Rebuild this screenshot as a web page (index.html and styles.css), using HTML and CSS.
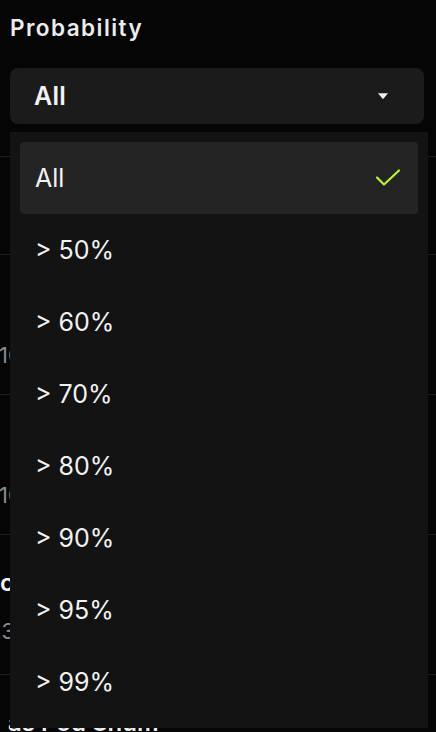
FILE: index.html
```html
<!DOCTYPE html>
<html lang="en">
<head>
<meta charset="utf-8">
<title>Probability filter</title>
<link rel="stylesheet" href="styles.css">
</head>
<body>
<div class="page">
  <div class="field-label">Probability</div>
  <div class="select-wrap">
    <div class="select">
      <span class="select-value">All</span>
      <svg class="caret" width="12" height="8" viewBox="0 0 12 8"><path d="M1 1.2 L11 1.2 L6.6 6.6 Q6 7.3 5.4 6.6 Z" fill="#f2f2f2"/></svg>
    </div>
    <div class="menu">
      <div class="option selected"><span>All</span>
        <svg class="check" width="28" height="20" viewBox="0 0 28 20"><path d="M3 9.5 L10 16.5 L25 2.5" fill="none" stroke="#b6f23c" stroke-width="2.2" stroke-linecap="round" stroke-linejoin="round"/></svg>
      </div>
      <div class="option"><span>&gt; 50%</span></div>
      <div class="option"><span>&gt; 60%</span></div>
      <div class="option"><span>&gt; 70%</span></div>
      <div class="option"><span>&gt; 80%</span></div>
      <div class="option"><span>&gt; 90%</span></div>
      <div class="option"><span>&gt; 95%</span></div>
      <div class="option"><span>&gt; 99%</span></div>
    </div>
  </div>
  <div class="list">
    <div class="row row-head"></div>
    <div class="row row-short"></div>
    <div class="row"><div class="row-title hidden-title">Market</div><div class="row-sub">10 signals</div></div>
    <div class="row"><div class="row-title hidden-title">Market</div><div class="row-sub">10 signals</div></div>
    <div class="row"><div class="row-title">crypto</div><div class="row-sub sub-shift">23 signals</div></div>
    <div class="row"><div class="row-title title-wide">as Pod Shum</div></div>
  </div>
</div>
</body>
</html>
```
FILE: styles.css
```css
* { box-sizing: border-box; }
html, body { margin: 0; padding: 0; }
body {
  background: #050505;
  color: #f0f0f0;
  font-family: Inter, "Noto Sans", sans-serif;
  width: 436px;
  height: 732px;
  overflow: hidden;
}
.page { padding-top: 13px; }
.field-label {
  font-size: 22.5px;
  font-weight: 600;
  line-height: 30px;
  padding-left: 10px;
  color: #ececec;
  letter-spacing: 1.45px;
}
.select-wrap {
  position: relative;
  margin: 25px 12px 0 10px;
}
.select {
  height: 56px;
  background: #1b1b1b;
  border-radius: 8px;
  display: flex;
  align-items: center;
  justify-content: space-between;
  padding: 0 35px 0 24px;
}
.select-value {
  font-size: 25px;
  font-weight: 600;
  color: #f2f2f2;
  letter-spacing: 0.3px;
}
.caret { display: block; }
.menu {
  position: absolute;
  top: 64px;
  left: 0;
  width: 418px;
  background: #131313;
  padding: 10px;
  z-index: 2;
}
.option {
  height: 72px;
  display: flex;
  align-items: center;
  justify-content: space-between;
  padding: 0 16px 0 16px;
  font-size: 25px;
  font-weight: 400;
  color: #f2f2f2;
  border-radius: 4px;
}
.option span { margin-left: -1px; }
.option.selected { background: #242424; }
.check { display: block; }
.list { margin-top: 0; }
.row {
  height: 140px;
  border-bottom: 1px solid #1f1f1f;
  overflow: hidden;
  padding-top: 30px;
}
.row-head { height: 33px; padding: 0; }
.row-short { height: 98px; padding: 0; }
.row-title {
  font-size: 24px;
  font-weight: 600;
  color: #f0f0f0;
  margin-left: 0;
  line-height: 36px;
}
.hidden-title { margin-left: 14px; }
.row-sub {
  font-size: 22px;
  color: #8a8a8a;
  margin-left: -1px;
  margin-top: 19px;
  line-height: 30px;
}
.sub-shift { margin-left: -12px; margin-top: 15px; }
.title-wide { margin-left: 8px; }
```
